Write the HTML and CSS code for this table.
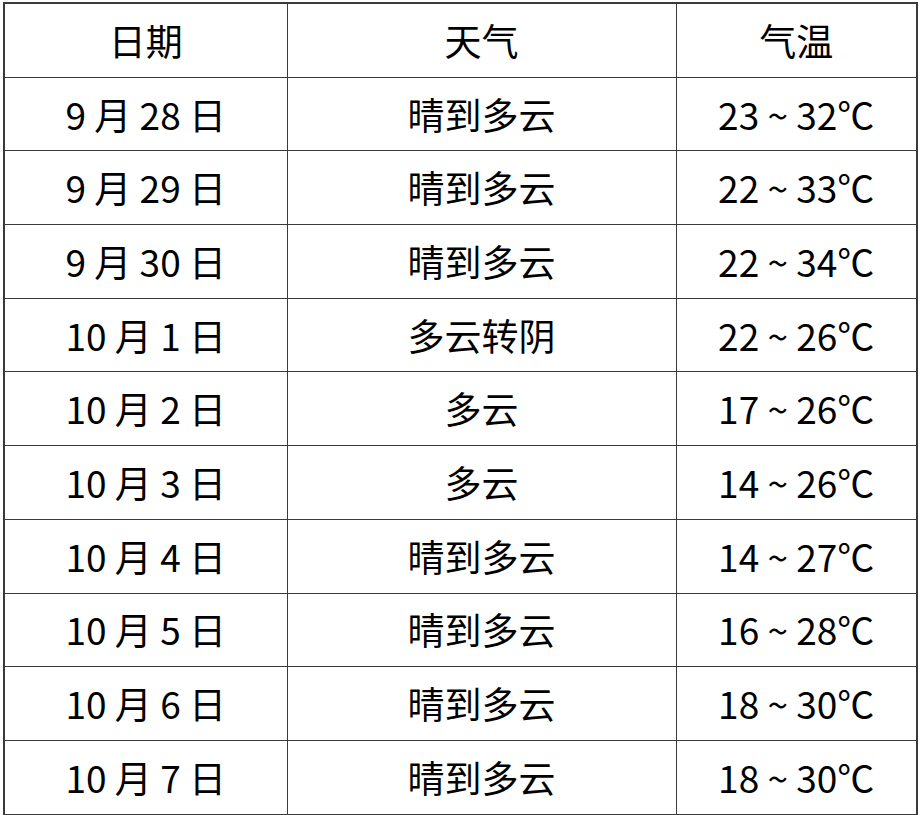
FILE: index.html
```html
<!DOCTYPE html>
<html lang="zh">
<head>
<meta charset="utf-8">
<link rel="stylesheet" href="styles.css">
</head>
<body>
<table class="weather">
  <colgroup>
    <col class="c-date">
    <col class="c-sky">
    <col class="c-temp">
  </colgroup>
  <thead>
    <tr><th>日期</th><th>天气</th><th>气温</th></tr>
  </thead>
  <tbody>
    <tr><td>9 月 28 日</td><td>晴到多云</td><td>23 ~ 32℃</td></tr>
    <tr><td>9 月 29 日</td><td>晴到多云</td><td>22 ~ 33℃</td></tr>
    <tr><td>9 月 30 日</td><td>晴到多云</td><td>22 ~ 34℃</td></tr>
    <tr><td>10 月 1 日</td><td>多云转阴</td><td>22 ~ 26℃</td></tr>
    <tr><td>10 月 2 日</td><td>多云</td><td>17 ~ 26℃</td></tr>
    <tr><td>10 月 3 日</td><td>多云</td><td>14 ~ 26℃</td></tr>
    <tr><td>10 月 4 日</td><td>晴到多云</td><td>14 ~ 27℃</td></tr>
    <tr><td>10 月 5 日</td><td>晴到多云</td><td>16 ~ 28℃</td></tr>
    <tr><td>10 月 6 日</td><td>晴到多云</td><td>18 ~ 30℃</td></tr>
    <tr><td>10 月 7 日</td><td>晴到多云</td><td>18 ~ 30℃</td></tr>
  </tbody>
</table>
</body>
</html>
```
FILE: styles.css
```css
html, body {
  margin: 0;
  padding: 0;
  background: #ffffff;
}
body {
  padding: 2px 0 0 3px;
  font-family: "Noto Sans CJK SC", "Noto Sans", sans-serif;
  color: #000000;
}
.weather {
  border-collapse: collapse;
  table-layout: fixed;
  width: 913px;
  border: 2px solid #3a3a3a;
}
.c-date { width: 283px; }
.c-sky { width: 389px; }
.c-temp { width: 241px; }
.weather th,
.weather td {
  border: 1px solid #3a3a3a;
  text-align: center;
  vertical-align: middle;
  font-size: 37px;
  font-weight: 400;
  line-height: 1;
  padding: 0;
  height: 72.7px;
}
```
